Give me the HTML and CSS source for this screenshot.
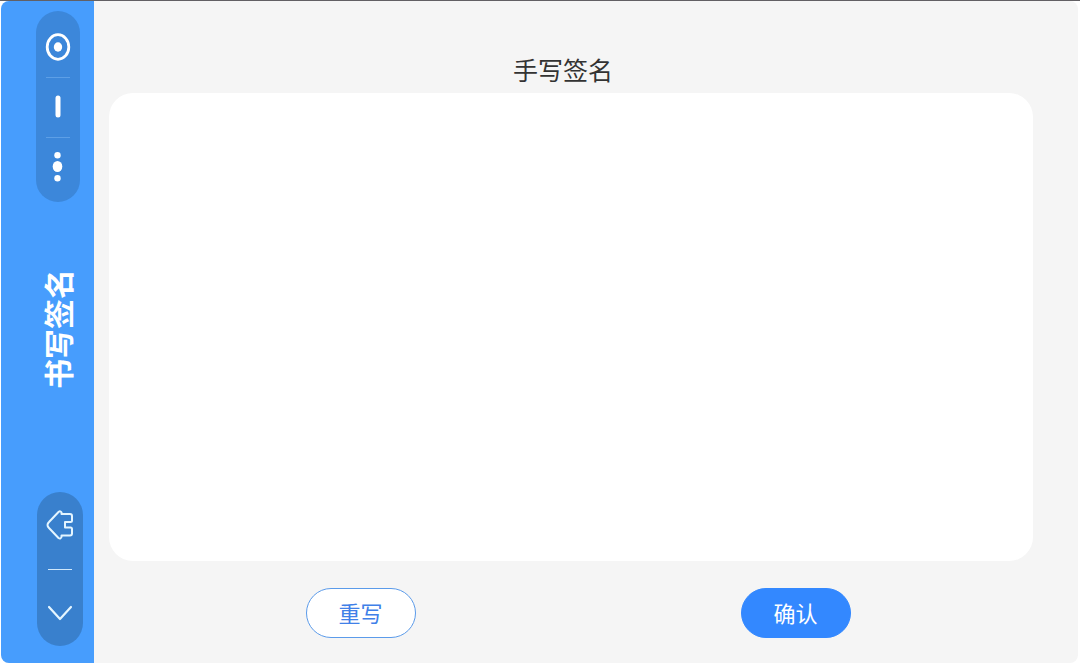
FILE: index.html
```html
<!DOCTYPE html>
<html lang="zh-CN">
<head>
    <meta charset="UTF-8">
    <meta name="viewport" content="width=device-width, initial-scale=1.0">
    <title>书写签名</title>
    <link rel="stylesheet" href="styles.css">
</head>
<body>
    <div class="app">
        <div class="sidebar">
            <div class="capsule menu">
                <button type="button" aria-label="关闭">
                    <svg width="26" height="30" viewBox="0 0 26 30">
                        <ellipse cx="13" cy="15" rx="10.8" ry="12.3" fill="none" stroke="#fff" stroke-width="2.8"/>
                        <ellipse cx="13" cy="15" rx="4.2" ry="4.7" fill="#fff"/>
                    </svg>
                </button>
                <i class="line"></i>
                <button type="button" aria-label="最小化">
                    <svg width="26" height="30" viewBox="0 0 26 30">
                        <path d="M13 6V23" fill="none" stroke="#fff" stroke-width="5" stroke-linecap="round"/>
                    </svg>
                </button>
                <i class="line"></i>
                <button type="button" aria-label="更多">
                    <svg width="26" height="30" viewBox="0 0 26 30">
                        <circle cx="12.5" cy="3.2" r="3.2" fill="#fff"/>
                        <ellipse cx="12.500" cy="14.5" rx="4.8" ry="5.5" fill="#fff"/>
                        <circle cx="12.5" cy="26.3" r="3.2" fill="#fff"/>
                    </svg>
                </button>
            </div>
            <h1 class="name">书写签名</h1>
            <div class="capsule nav">
                <button type="button" aria-label="首页">
                    <svg width="28" height="32" viewBox="0 0 28 32">
                        <path d="M1.5 16C1.5 14.5 2 14 3 13L12.5 3Q14.5 1.5 15.5 3.5V5H24Q26 5 26 7V11.5Q26 13 24.5 13H19V18.5H24.5Q26 18.5 26 20V24.5Q26 26.5 24 26.5H15.5V28Q14.5 30.5 12.5 29L3 19C2 18 1.5 17.5 1.5 16Z" fill="none" stroke="#e4f5ff" stroke-width="2" stroke-linejoin="round"/>
                    </svg>
                </button>
                <i class="line"></i>
                <button type="button" aria-label="返回">
                    <svg width="28" height="32" viewBox="0 0 28 32">
                        <path d="M3 10L14 22L25 10" fill="none" stroke="#e4f5ff" stroke-width="2.2" stroke-linecap="round" stroke-linejoin="round"/>
                    </svg>
                </button>
            </div>
        </div>
        <div class="main">
            <h2 class="title">手写签名</h2>
            <canvas class="board"></canvas>
            <div class="btns">
                <button type="button" class="btn">重写</button>
                <button type="button" class="btn ok">确认</button>
            </div>
        </div>
    </div>
</body>
</html>
```

FILE: styles.css
```css
*{
    margin:0;
    padding:0;
    box-sizing:border-box;
}
body{
    height:100vh;
    padding:0 2px 3px 1px;
    border-top:1px solid #626064;
    background:#fff;
    font-family:"Liberation Sans", "Noto Sans CJK SC", sans-serif;
}
button{
    border:none;
    background:none;
    font-family:inherit;
    cursor:pointer;
}
svg{
    display:block;
}
.app{
    display:flex;
    height:100%;
    background:#f5f5f5;
    border-radius:8px;
    overflow:hidden;
}
.sidebar{
    display:grid;
    grid-template-rows:1fr auto 1fr;
    width:93px;
    padding:10px 11px 17px 35px;
    background:#479dfd;
}
.capsule{
    display:flex;
    flex-direction:column;
    align-items:center;
    justify-content:space-between;
    border-radius:24px;
}
.menu{
    width:44px;
    height:191px;
    padding:21px 0 20px;
    background:#3c87da;
}
.nav{
    align-self:end;
    justify-self:end;
    width:46px;
    height:154px;
    padding:17px 0;
    background:#3980cd;
}
.line{
    width:24px;
    height:1px;
    background:#cfe8fb;
}
.menu .line{
    background:#5d9fe6;
}
.name{
    justify-self:center;
    writing-mode:vertical-rl;
    text-orientation:sideways;
    transform:rotate(180deg);
    color:#fff;
    font-size:30px;
    line-height:32px;
}
.main{
    flex:1;
    display:flex;
    flex-direction:column;
    padding:50px 45px 25px 15px;
}
.title{
    padding:0 16px 2px 0;
    color:#333;
    font-size:25px;
    font-weight:400;
    line-height:40px;
    text-align:center;
}
.board{
    flex:1;
    width:100%;
    min-height:0;
    background:#fff;
    border-radius:24px;
}
.btns{
    display:flex;
    justify-content:space-around;
    padding:27px 20px 0 34px;
}
.btn{
    width:110px;
    height:50px;
    padding-bottom:3px;
    border:1px solid #5b9bea;
    border-radius:25px;
    background:#fff;
    color:#4080e8;
    font-size:22px;
}
.ok{
    border-color:#3388ff;
    background:#3388ff;
    color:#fff;
}
```
